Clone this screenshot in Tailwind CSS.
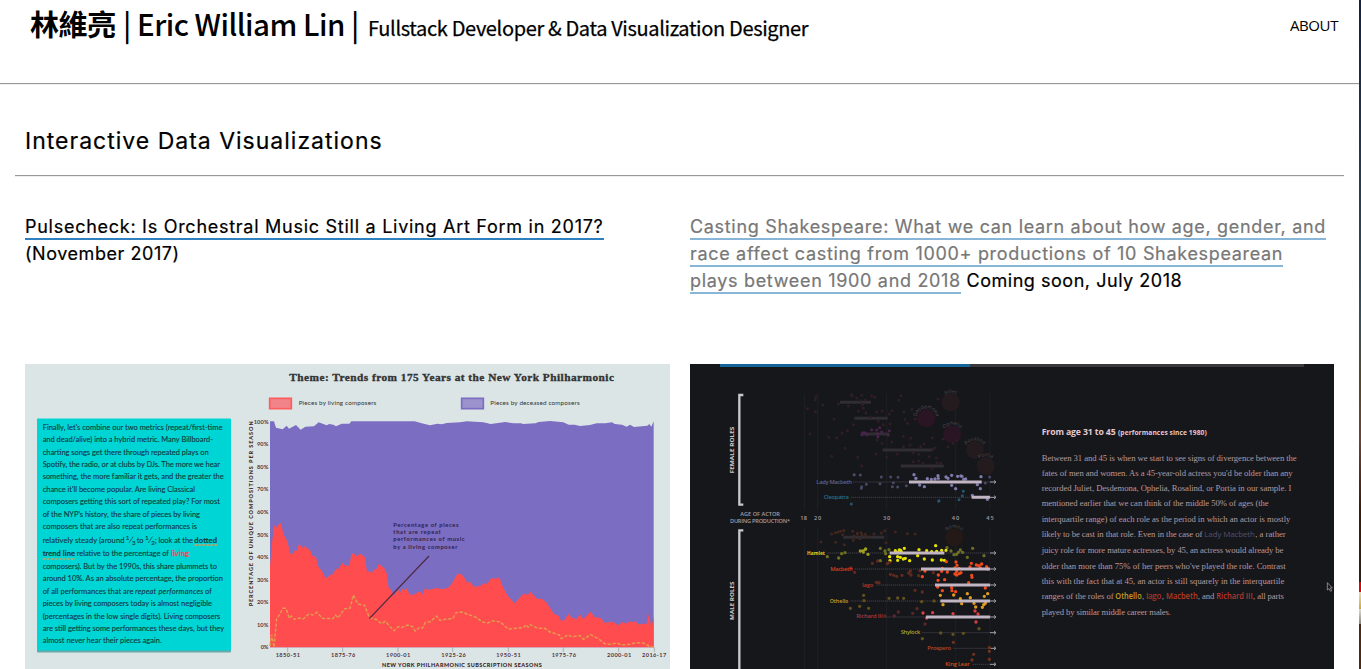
<!DOCTYPE html>
<html lang="en">
<head>
<meta charset="utf-8">
<title>林維亮 | Eric William Lin</title>
<script src="https://cdn.jsdelivr.net/npm/@tailwindcss/browser@4"></script>
</head>
<body class="flex h-screen overflow-hidden bg-white text-black font-['Inter',sans-serif]">
<div class="w-[1359px] shrink-0">
  <header class="flex h-[85px] items-start justify-between border-b border-b-[#eeeeee] pl-[30px] pr-[21px]">
    <h1 class="-mt-[2px] flex items-baseline whitespace-nowrap font-['Noto_Sans_CJK_TC',sans-serif] leading-[50px]">
      <span class="w-[93px] text-[29px] font-bold tracking-[-0.4px]">林維亮</span>
      <span class="w-[245px] text-[29.5px] font-medium tracking-[-0.5px]">| Eric William Lin |</span>
      <span class="text-[20px] font-normal tracking-[-0.35px] [-webkit-text-stroke:0.25px_black]">Fullstack Developer &amp; Data Visualization Designer</span>
    </h1>
    <a class="pt-[12px] font-['Open_Sans',sans-serif] text-[15px] leading-[26px] tracking-[-0.4px]">ABOUT</a>
  </header>
  <div class="-mt-[2px] h-px bg-[#999999]"></div>
  <main class="flex flex-col px-[15px]">
    <h2 class="mt-[40px] h-[51px] pl-[10px] text-[23px] leading-[34px] tracking-[1px] [-webkit-text-stroke:0.2px_black]">Interactive Data Visualizations</h2>
    <div class="h-[2px] border-t border-b border-t-[#999999] border-b-[#eeeeee] w-[1329px]"></div>
    <div class="grid grid-cols-[645px_644px] gap-x-[20px] pl-[10px] pt-[36px] text-[18px] leading-[27px] whitespace-nowrap">
      <p class="h-[151px]"><a class="border-b-2 border-[#2f80bf] pb-px tracking-[0.73px] [-webkit-text-stroke:0.2px_black]">Pulsecheck: Is Orchestral Music Still a Living Art Form in 2017?</a><br><span class="tracking-[0.55px] [-webkit-text-stroke:0.2px_black]">(November 2017)</span></p>
      <p class="h-[151px] tracking-[0.53px] [-webkit-text-stroke:0.2px_black]"><a class="border-b-2 border-[#88b6d8] pb-px text-[#777777] tracking-[0.68px] [-webkit-text-stroke:0.2px_#777777]">Casting Shakespeare: What we can learn about how age, gender, and<br>race affect casting from 1000+ productions of 10 Shakespearean<br>plays between 1900 and 2018</a> Coming soon, July 2018</p>

      <svg class="block h-[305px] w-[645px]" viewBox="25 364 645 305">
        <rect x="25" y="364" width="645" height="305" fill="#dce5e6"/>
        <rect x="37" y="419.500" width="194" height="233" rx="1" fill="#6aa7a8"/>
        <rect x="37" y="418.500" width="194" height="232" rx="1" fill="#00d5d5"/>
        <g transform="translate(20 360) scale(.33333)" font-family="Lato" font-size="22.500" fill="#12393d" stroke="#12393d" stroke-width=".35">
          <text x="68" y="210" textLength="539">Finally, let's combine our two metrics (repeat/first-time</text>
          <text x="68" y="247" textLength="511">and dead/alive) into a hybrid metric. Many Billboard-</text>
          <text x="68" y="284" textLength="498">charting songs get there through repeated plays on</text>
          <text x="68" y="321" textLength="532">Spotify, the radio, or at clubs by DJs. The more we hear</text>
          <text x="68" y="358" textLength="543">something, the more familiar it gets, and the greater the</text>
          <text x="68" y="395" textLength="457">chance it'll become popular. Are living Classical</text>
          <text x="68" y="432" textLength="532">composers getting this sort of repeated play? For most</text>
          <text x="68" y="470" textLength="472">of the NYP's history, the share of pieces by living</text>
          <text x="68" y="507" textLength="463">composers that are also repeat performances is</text>
          <text x="68" y="548" textLength="245">relatively steady (around</text>
          <text x="317" y="541" font-size="19">1</text><text x="336" y="554" font-size="19">3</text>
          <text x="350" y="548">to</text>
          <text x="375" y="541" font-size="19">1</text><text x="394" y="554" font-size="19">2</text>
          <path d="M339 530 327 549M397 530 385 549" stroke-width="2"/>
          <text x="404" y="548" textLength="115">; look at the</text>
          <text x="523" y="548" textLength="68" font-weight="700">dotted</text>
          <text x="68" y="589" textLength="97" font-weight="700">trend line</text>
          <text x="170" y="589" textLength="277">relative to the percentage of</text>
          <text x="453" y="589" textLength="54" fill="#d65a58" stroke="#d65a58" stroke-width="1">living</text>
          <text x="68" y="627" textLength="523">composers). But by the 1990s, this share plummets to</text>
          <text x="68" y="664" textLength="541">around 10%. As an absolute percentage, the proportion</text>
          <text x="68" y="701" textLength="272">of all performances that are</text>
          <text x="345" y="701" textLength="205" font-style="italic">repeat performances</text>
          <text x="555" y="701">of</text>
          <text x="68" y="738" textLength="508">pieces by living composers today is almost negligible</text>
          <text x="68" y="776" textLength="533">(percentages in the low single digits). Living composers</text>
          <text x="68" y="813" textLength="544">are still getting some performances these days, but they</text>
          <text x="68" y="850" textLength="357">almost never hear their pieces again.</text>
          <path d="M523 555H591M68 597H166" stroke="#c9a25e" stroke-width="4" stroke-dasharray="8 4"/>
        </g>
        <g transform="translate(240 360) scale(.33333)" font-family="Lato">
          <text x="148" y="63" textLength="974" font-family="'Liberation Serif'" font-weight="700" font-size="34" fill="#333" stroke="#333" stroke-width="1">Theme: Trends from 175 Years at the New York Philharmonic</text>
          <rect x="89" y="115" width="65" height="31" fill="#f28489" stroke="#ff5c5c" stroke-width="5"/>
          <rect x="665" y="115" width="65" height="31" fill="#9c93cd" stroke="#7b6dc2" stroke-width="5"/>
          <text x="176" y="134" textLength="233" font-size="19" fill="#333">Pieces by living composers</text>
          <text x="751" y="134" textLength="268" font-size="19" fill="#333">Pieces by deceased composers</text>
          <path fill="#7b6dc2" d="M90 184 102 184 108 203 128 208 140 197 147 206 168 195 182 209 196 200 222 199 236 187 260 196 268 192 280 194 288 199 305 191 328 191 334 184 524 184 545 190 570 196 592 191 606 193 620 189 660 187 680 184 730 187 752 192 796 186 820 190 844 190 848 192 886 190 896 186 930 183 970 187 986 194 1004 194 1020 198 1050 195 1070 190 1096 190 1116 187 1124 192 1146 194 1160 200 1170 194 1182 201 1222 197 1228 192 1234 200 1241 184V862H90Z"/>
          <path fill="#ff4c4e" d="M90 862V620L96 550 102 495 110 503 118 490 124 491 130 522 143 545 150 580 158 582 163 572 171 572 177 551 188 563 196 558 203 568 209 568 218 588 228 590 234 618 247 635 256 653 262 653 270 644 276 646 288 626 294 628 308 608 313 615 328 617 334 583 340 580 350 588 362 581 374 591 382 640 388 631 395 640 403 628 408 630 416 612 432 623 440 640 446 683 454 690 462 707 474 688 480 699 486 686 493 690 500 685 510 704 520 704 540 693 547 704 555 685 567 690 592 683 600 687 623 685 635 672 652 642 664 642 676 658 682 668 690 665 702 680 722 678 730 670 742 671 754 654 766 656 778 652 790 684 804 708 824 730 836 717 850 701 864 704 871 695 892 717 906 716 920 728 942 762 956 767 964 784 976 778 984 762 998 775 1010 777 1020 763 1030 778 1051 755 1064 771 1082 774 1094 788 1118 785 1136 796 1148 786 1158 791 1168 784 1178 787 1186 784 1198 795 1204 791 1220 791 1227 760 1234 805 1241 768V862Z"/>
          <path fill="none" stroke="#e2994f" stroke-width="4.500" stroke-dasharray="10 5" d="M90 858 95 824 102 862 110 776 120 762 128 745 138 745 148 775 154 768 163 778 178 774 190 777 206 762 220 765 230 757 248 775 278 776 286 765 294 774 314 746 330 745 340 705 354 732 374 736 388 773 410 779 424 791 436 784 450 800 462 812 474 800 484 803 502 795 518 800 526 814 536 804 547 805 556 787 570 785 590 768 600 781 614 778 638 776 648 758 664 756 706 771 730 787 744 789 756 783 780 785 790 794 804 807 850 803 858 794 864 802 870 794 894 805 914 805 930 816 958 825 964 836 984 824 994 830 1020 827 1030 838 1052 824 1078 838 1094 851 1110 853 1130 849 1146 855 1170 853 1186 848 1210 849 1230 860 1240 861"/>
          <path d="M567 588 388 776" stroke="#502b45" stroke-width="4"/>
          <path d="M143 862v14M308 862v14M474 862v14M638 862v14M805 862v14M970 862v14M1136 862v14M1243 862v14" stroke="#8f999b" stroke-width="2"/>
          <g font-size="17.500" font-weight="700" fill="#30234b">
            <text x="460" y="501" textLength="196">Percentage of pieces</text><text x="460" y="523" textLength="142">that are repeat</text><text x="460" y="544" textLength="214">performances of music</text><text x="460" y="567" textLength="192">by a living composer</text>
          </g>
          <g font-size="17" font-weight="700" fill="#55363c">
            <text x="41" y="192" textLength="45">100%</text><text x="51" y="259" textLength="34">90%</text><text x="51" y="327" textLength="34">80%</text><text x="51" y="394" textLength="34">70%</text><text x="51" y="462" textLength="34">60%</text><text x="51" y="530" textLength="34">50%</text><text x="51" y="597" textLength="34">40%</text><text x="51" y="665" textLength="34">30%</text><text x="51" y="733" textLength="34">20%</text><text x="51" y="800" textLength="34">10%</text><text x="62" y="868" textLength="23">0%</text>
            <text x="107" y="891" textLength="73">1850-51</text><text x="273" y="891" textLength="73">1875-76</text><text x="438" y="891" textLength="73">1900-01</text><text x="604" y="891" textLength="73">1925-26</text><text x="769" y="891" textLength="73">1950-51</text><text x="935" y="891" textLength="73">1975-76</text><text x="1101" y="891" textLength="73">2000-01</text><text x="1206" y="891" textLength="73">2016-17</text>
          </g>
          <g font-size="16.500" font-weight="900" fill="#3d1c20">
            <text x="426" y="920" textLength="479">NEW YORK PHILHARMONIC SUBSCRIPTION SEASONS</text>
            <text transform="translate(40 739) rotate(-90)" textLength="555">PERCENTAGE OF UNIQUE COMPOSITIONS PER SEASON</text>
          </g>
        </g>
      </svg>

      <svg class="block h-[305px] w-[644px]" viewBox="690 364 644 305">
        <rect x="690" y="364" width="644" height="305" fill="#16171b"/>
        <rect x="720" y="364" width="250" height="3" fill="#14659a"/>
        <rect x="970" y="364" width="334" height="3" fill="#38383d"/>
        <g transform="translate(690 360) scale(.33333)" font-family="'Open Sans'">
          <path d="M343 100V450M383 100V450M590 100V450M797 100V450M900 100V450M343 500V927M383 500V927M590 500V927M797 500V927M900 500V927" stroke="#1f2024" stroke-width="3"/>
          <path d="M160 105H148V434H160M160 511H148V927" fill="none" stroke="#c9c7ca" stroke-width="7"/>
          <g font-size="18" font-weight="700" fill="#cbc9cd">
            <text transform="translate(133 340) rotate(-90)" textLength="140" lengthAdjust="spacingAndGlyphs">FEMALE ROLES</text>
            <text transform="translate(133 780) rotate(-90)" textLength="115" lengthAdjust="spacingAndGlyphs">MALE ROLES</text>
          </g>
          <g font-size="17" font-weight="600" fill="#a09ea3">
            <text x="151" y="468" textLength="119">AGE OF ACTOR</text><text x="120" y="489" textLength="180">DURING PRODUCTION*</text>
            <text x="331" y="479" textLength="20">18</text><text x="372" y="479" textLength="22">20</text><text x="579" y="479" textLength="22">30</text><text x="785" y="479" textLength="23">40</text><text x="889" y="479" textLength="22">45</text>
          </g>
          <path d="M450 127H543M493 175H593M512 222H597M578 270H727M632 318H761M460 532H583" stroke="#302d33" stroke-width="9"/>
          <g fill="#241b1f"><circle cx="782" cy="127" r="27"/><circle cx="709" cy="175" r="27" fill="#291524"/><circle cx="787" cy="223" r="27" fill="#291524"/><circle cx="855" cy="270" r="27"/><circle cx="887" cy="318" r="27"/><circle cx="793" cy="532" r="27" fill="#241917"/></g>
          <defs>
            <path id="juliet" d="M753 127a29 29 0 0 1 58 0"/><path id="desdemona" d="M679 175a30 30 0 0 1 60 0"/><path id="ophelia" d="M758 223a29 29 0 0 1 58 0"/><path id="rosalind" d="M826 270a29 29 0 0 1 58 0"/><path id="portia" d="M858 318a29 29 0 0 1 58 0"/><path id="romeo" d="M764 532a29 29 0 0 1 58 0"/>
          </defs>
          <g font-size="15" fill="#514b52" text-anchor="middle">
            <text><textPath href="#juliet" startOffset="50%">Juliet</textPath></text><text><textPath href="#desdemona" startOffset="50%">Desdemona</textPath></text><text><textPath href="#ophelia" startOffset="50%">Ophelia</textPath></text><text><textPath href="#rosalind" startOffset="50%">Rosalind</textPath></text><text><textPath href="#portia" startOffset="50%">Portia</textPath></text><text><textPath href="#romeo" startOffset="50%">Romeo</textPath></text>
          </g>
          <path d="M490 366H915M483 412H915M413 579H915M494 627H915M560 675H915M482 723H915M580 771H915M697 818H915M790 865H915M848 913H915" stroke="#3f3d46" stroke-width="3" stroke-dasharray="4 2"/>
          <path d="M900 366h18m-6-5 6 5-6 5M900 412h18m-6-5 6 5-6 5M900 579h18m-6-5 6 5-6 5M900 627h18m-6-5 6 5-6 5M900 675h18m-6-5 6 5-6 5M900 723h18m-6-5 6 5-6 5M900 771h18m-6-5 6 5-6 5M900 818h18m-6-5 6 5-6 5M900 865h18m-6-5 6 5-6 5M900 913h18m-6-5 6 5-6 5" fill="none" stroke="#9c9cab" stroke-width="3"/>
          <!-- faded performances -->
          <g fill="none" stroke-linecap="round" stroke-width="9">
            <path stroke="#301e25" d="M378 110h0M375 119h0M352 146h0M376 155h0M398 135h0M432 177h0M360 221h0M416 232h0M440 233h0M456 219h0M472 212h0M465 265h0M425 289h0M503 292h0M515 317h0M484 104h0M445 131h0M475 138h0M500 114h0M512 122h0M526 120h0M518 134h0M505 154h0M490 194h0M486 107h0M515 106h0M545 107h0M555 112h0M633 107h0M626 121h0M744 117h0M520 145h0M528 158h0M541 171h0M560 156h0M576 153h0M598 162h0M606 152h0M642 155h0M666 148h0M565 184h0M580 194h0M600 192h0M645 178h0M653 190h0M676 177h0M561 240h0M576 250h0M605 246h0M640 229h0M662 234h0M727 233h0M759 237h0M558 282h0M590 292h0M622 282h0M640 260h0M660 255h0M670 278h0M686 283h0M692 260h0M702 252h0M718 290h0M729 268h0M739 294h0M670 305h0M686 303h0M699 310h0M725 325h0M741 308h0M752 310h0M774 261h0M789 250h0M801 241h0M734 264h0"/>
            <path stroke="#4a234b" d="M519 218h0M525 218h0M532 224h0M516 224h0M545 209h0M560 210h0M562 221h0M569 203h0M575 216h0M564 230h0M595 225h0M598 212h0"/>
            <path stroke="#40261e" d="M393 546h0M425 522h0M436 518h0M437 547h0M444 516h0M452 514h0M462 512h0M458 524h0M461 511h0M463 554h0M488 514h0M492 528h0M490 541h0M502 522h0M513 518h0M510 536h0M526 523h0M530 530h0M516 524h0M502 520h0M552 522h0M574 519h0M584 512h0M588 548h0M616 516h0M652 521h0M675 522h0"/>
            <path stroke="#484966" d="M492 344h0M511 345h0M529 373h0M514 385h0M574 351h0M570 371h0M602 351h0M624 352h0M607 380h0M623 381h0M649 377h0M610 368h0M676 355h0M493 344h0M515 380h0M899 351h0M886 369h0"/>
            <path stroke="#25566d" d="M484 432h0M747 422h0M746 424h0M807 419h0M817 407h0M820 394h0"/>
          </g>
          <!-- current age window -->
          <g fill="none" stroke-linecap="round" stroke-width="10">
            <path stroke="#7f7cae" d="M672 344h0M678 355h0M689 375h0M703 380h0M712 356h0M724 358h0M735 357h0M744 347h0M745 355h0M768 351h0M774 355h0M785 346h0M785 376h0M797 386h0M803 349h0M813 348h0M816 349h0M821 358h0M827 357h0M873 350h0M871 386h0M862 374h0M847 406h0M892 418h0"/>
            <path stroke="#6d6f22" d="M412 590h0M446 594h0M455 581h0M465 578h0M571 565h0M585 573h0M597 569h0M571 602h0M587 581h0M771 563h0M783 573h0M792 584h0M800 583h0M811 570h0M805 577h0M818 577h0M832 592h0M848 565h0M882 587h0"/>
            <path stroke="#a0a020" d="M511 573h0M519 573h0M526 568h0M534 583h0M520 576h0M527 567h0"/>
            <path stroke="#e6e100" d="M599 590h0M600 602h0M616 572h0M622 577h0M632 571h0M643 565h0M628 570h0M634 575h0M623 590h0M631 592h0M640 597h0M623 601h0M646 595h0M659 602h0M687 569h0M683 587h0M703 597h0M710 572h0M727 600h0M737 557h0M725 575h0M740 574h0M755 571h0M768 571h0M754 600h0M763 601h0"/>
            <path stroke="#602a1e" d="M494 637h0M483 624h0M547 610h0M563 603h0M592 611h0M598 607h0M559 667h0M567 668h0M601 643h0M611 646h0M620 649h0M636 646h0M656 639h0M661 633h0M663 645h0M686 647h0M675 691h0M697 696h0M730 638h0M690 632h0"/>
            <path stroke="#f04a1b" d="M705 633h0M697 650h0M769 605h0M757 625h0M745 645h0M755 634h0M744 661h0M764 659h0M772 636h0M798 606h0M801 616h0M795 624h0M807 625h0M800 634h0M795 642h0M808 641h0M813 638h0M800 645h0M844 610h0M840 621h0M859 615h0M867 617h0M875 612h0M871 624h0M890 620h0M893 627h0M845 646h0M846 652h0M836 668h0M743 681h0M757 692h0M785 683h0M786 692h0M797 695h0M886 684h0"/>
            <path stroke="#64501d" d="M481 745h0M509 739h0M521 706h0M522 722h0M597 715h0M623 714h0M641 715h0M695 725h0M732 723h0M536 745h0M752 819h0M789 823h0M820 820h0M867 806h0M697 836h0"/>
            <path stroke="#e09c20" d="M751 706h0M759 734h0M791 705h0M811 716h0M815 731h0M832 701h0M841 713h0M852 730h0M857 741h0M877 742h0M881 734h0M883 709h0M893 701h0M887 727h0M885 731h0"/>
            <path stroke="#5b272b" d="M585 768h0M613 768h0M625 756h0M668 760h0M681 746h0M705 792h0"/>
            <path stroke="#d93f42" d="M699 759h0M728 758h0M710 774h0M789 761h0M855 753h0M864 762h0M858 786h0"/>
            <path stroke="#6f321e" d="M790 847h0M898 863h0M898 874h0M851 883h0M846 900h0M898 898h0"/>
          </g>
          <path d="M657 366H875M845 412H900M599 579H763M693 627H900M735 675H900M751 723H900M708 771H900" stroke="#c2b6c4" stroke-width="9"/>
          <g font-size="17.500" fill="#646386" font-weight="600">
            <text x="379" y="371" textLength="107">Lady Macbeth</text>
            <text x="401" y="417" textLength="76" fill="#256e91">Cleopatra</text>
            <text x="351" y="584" textLength="54" fill="#d8d51e" font-weight="700" lengthAdjust="spacingAndGlyphs">Hamlet</text>
            <text x="421" y="633" textLength="67" fill="#d3411f">Macbeth</text>
            <text x="516" y="680" textLength="34" fill="#b33827">Iago</text>
            <text x="419" y="728" textLength="56" fill="#d69c28" lengthAdjust="spacingAndGlyphs">Othello</text>
            <text x="499" y="775" textLength="79" fill="#a93a3c">Richard III</text>
            <text x="632" y="823" textLength="59" fill="#a8a62d">Shylock</text>
            <text x="712" y="870" textLength="71" fill="#b24a20">Prospero</text>
            <text x="766" y="918" textLength="73" fill="#d24d18">King Lear</text>
          </g>
        </g>
        <g transform="translate(1030 410) scale(.33333)" font-family="'Liberation Serif'" font-size="26" fill="#b5979f">
          <g font-family="'Open Sans'" font-weight="700" fill="#e5c7ce"><text x="35" y="75" textLength="222">From age 31 to 45</text><text x="264" y="75" font-size="20" textLength="266">(performances since 1980)</text></g>
          <text x="35" y="153" textLength="765">Between 31 and 45 is when we start to see signs of divergence between the</text>
          <text x="35" y="198" textLength="753">fates of men and women. As a 45-year-old actress you'd be older than any</text>
          <text x="35" y="243" textLength="749">recorded Juliet, Desdemona, Ophelia, Rosalind, or Portia in our sample. I</text>
          <text x="35" y="289" textLength="681">mentioned earlier that we can think of the middle 50% of ages (the</text>
          <text x="35" y="335" textLength="746">interquartile range) of each role as the period in which an actor is mostly</text>
          <text x="35" y="381" textLength="482">likely to be cast in that role. Even in the case of</text>
          <text x="523" y="381" textLength="152" fill="#515071" font-family="'Open Sans'" font-size="24">Lady Macbeth</text><text x="676" y="381" textLength="91">, a rather</text>
          <text x="35" y="430" textLength="725">juicy role for more mature actresses, by 45, an actress would already be</text>
          <text x="35" y="476" textLength="732">older than more than 75% of her peers who've played the role. Contrast</text>
          <text x="35" y="522" textLength="728">this with the fact that at 45, an actor is still squarely in the interquartile</text>
          <text x="35" y="567" textLength="216">ranges of the roles of</text>
          <g font-family="'Open Sans'" font-size="24" font-weight="600"><text x="256" y="567" textLength="79" fill="#c49d20" lengthAdjust="spacingAndGlyphs">Othello</text><text x="348" y="567" textLength="46" fill="#a93525">Iago</text><text x="408" y="567" textLength="95" fill="#b33c22" lengthAdjust="spacingAndGlyphs">Macbeth</text><text x="559" y="567" textLength="109" fill="#b63830" lengthAdjust="spacingAndGlyphs">Richard III</text></g>
          <text x="336" y="567">,</text><text x="395" y="567">,</text><text x="503" y="567" textLength="50">, and</text><text x="669" y="567" textLength="93">, all parts</text>
          <text x="35" y="616" textLength="388">played by similar middle career males.</text>
          <path d="M892 518v22l5-4 5 8 3-2-4-8h6z" fill="#17181b" stroke="#b8b8b8" stroke-width="2"/>
        </g>
      </svg>
    </div>
  </main>
</div>
<div class="flex w-[2px] shrink-0 flex-col">
  <div class="h-[320px] bg-linear-to-b from-[#14213f] to-[#38505a]"></div>
  <div class="h-[120px] bg-linear-to-b from-[#38505a] via-[#54492c] to-[#6a4436]"></div>
  <div class="h-[142px] bg-linear-to-b from-[#6a4436] via-[#3a1c08] to-[#2c2016]"></div>
  <div class="h-[10px] bg-[#dd0505]"></div>
  <div class="h-[17px] bg-linear-to-b from-[#e8dcb0] to-[#d0aa20]"></div>
  <div class="h-[15px] bg-linear-to-b from-[#e0dcd0] to-[#8a8678]"></div>
  <div class="h-[45px] bg-[#4a2a10]"></div>
</div>
</body>
</html>
